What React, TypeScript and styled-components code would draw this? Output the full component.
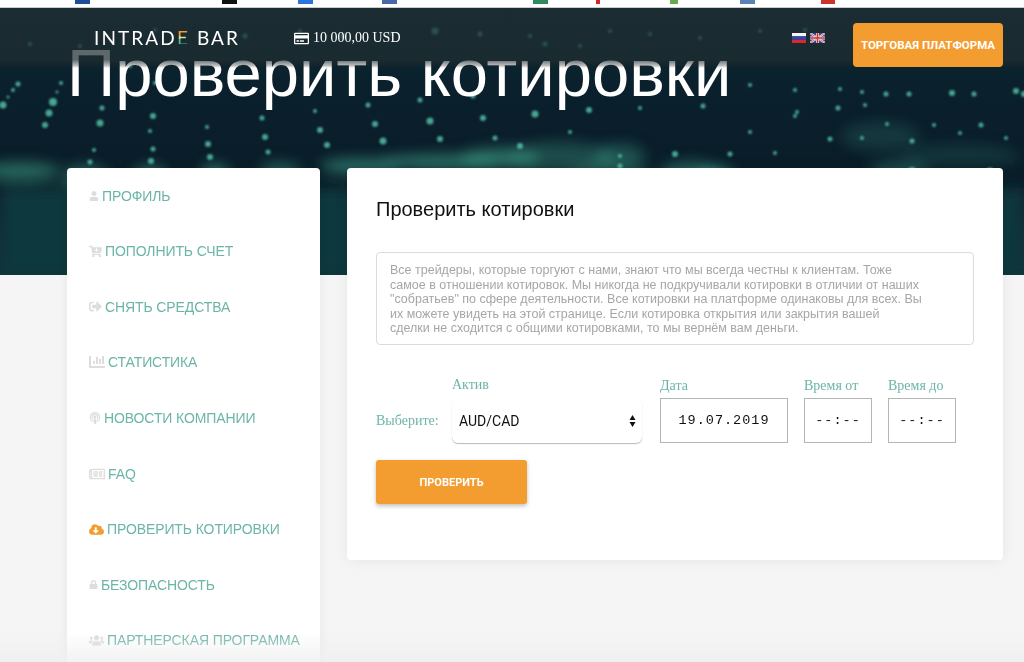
import React from "react";
import styled, { createGlobalStyle } from "styled-components";
import {
  FaUser, FaCartPlus, FaSignOutAlt, FaChartBar, FaPodcast, FaRegNewspaper,
  FaCloudDownloadAlt, FaLock, FaUsers, FaRegCreditCard,
} from "react-icons/fa";

const Global = createGlobalStyle`
  html, body { margin: 0; padding: 0; background: #f5f5f5; overflow: hidden; }
  * { box-sizing: border-box; }
`;

const Page = styled.div`
  width: 1024px;
  height: 662px;
  overflow: hidden;
  position: relative;
  background: #f5f5f5;
  font-family: "Liberation Sans", Arial, sans-serif;
`;

const BrowserStrip = styled.div`
  height: 8px;
  background: #fff;
  border-bottom: 1px solid #c9cbcc;
  overflow: hidden;
  svg { display: block; }
`;

const Hero = styled.section`
  position: relative;
  height: 267px;
  background: #0a1c28;
  overflow: hidden;
`;

const HeroArt = styled.svg`
  position: absolute;
  left: 0;
  top: 0;
`;

const HeroTitle = styled.h1`
  position: relative;
  margin: 0;
  padding: 26px 0 0 67px;
  font-size: 67px;
  line-height: 77px;
  font-weight: 400;
  color: #fff;
  white-space: nowrap;
`;

const HeaderBar = styled.header`
  position: absolute;
  left: 0;
  top: 0;
  width: 100%;
  height: 60px;
  display: flex;
  align-items: center;
  padding: 0 21px 0 94px;
  background: linear-gradient(to bottom, rgba(32,46,50,.72) 0, rgba(32,46,50,.72) 86%, rgba(40,40,42,.3) 96%, rgba(40,40,42,0) 100%);
`;

const Logo = styled.div`
  font-family: Lato, "Liberation Sans", sans-serif;
  font-weight: 400;
  font-size: 19px;
  line-height: 20px;
  letter-spacing: 2.1px;
  color: #fff;
  white-space: pre;
  width: 200px;
`;

const LogoE = styled.span`
  background: linear-gradient(to bottom, transparent 0 22%, #f39c2f 22% 42%, #d8e08a 42% 58%, #4fb7a0 58% 80%, transparent 80%);
  -webkit-background-clip: text;
  background-clip: text;
  color: transparent;
`;

const Balance = styled.div`
  display: flex;
  align-items: center;
  gap: 4px;
  font-family: "Liberation Serif", serif;
  font-size: 14px;
  color: #fff;
  svg { width: 15px; height: 15px; }
`;

const HeaderRight = styled.div`
  margin-left: auto;
  display: flex;
  align-items: center;
  gap: 28px;
`;

const Flags = styled.div`
  display: flex;
  gap: 4px;
  svg { display: block; }
`;

const PlatformButton = styled.a`
  width: 150px;
  height: 44px;
  margin-top: 22px;
  margin-bottom: 8px;
  display: flex;
  align-items: center;
  justify-content: center;
  background: #f39c2f;
  border-radius: 4px;
  color: #fff;
  font-family: Roboto, sans-serif;
  font-weight: 700;
  font-size: 11.5px;
  white-space: nowrap;
`;

const Content = styled.div`
  position: relative;
  margin-top: -107px;
  padding: 0 21px 0 67px;
  display: flex;
  gap: 27px;
  align-items: flex-start;
`;

const Sidebar = styled.nav`
  width: 253px;
  flex: none;
  height: 520px;
  background: #fff;
  border-radius: 4px 4px 0 0;
  box-shadow: 0 0 12px rgba(0,0,0,.06);
`;

const NavItem = styled.a`
  height: 55.55px;
  padding-left: 22px;
  display: flex;
  align-items: center;
  gap: 3px;
  font-size: 14px;
  letter-spacing: -0.1px;
  color: #6cb5a8;
  white-space: nowrap;
`;

const NavIcon = styled.span<{ $w: number; $active?: boolean }>`
  width: ${(p) => p.$w}px;
  flex: none;
  display: flex;
  color: ${(p) => (p.$active ? "#f39c2f" : "#dddddd")};
  svg { width: 100%; height: auto; display: block; }
`;

const Card = styled.main`
  width: 656px;
  height: 392px;
  flex: none;
  background: #fff;
  border-radius: 4px;
  box-shadow: 0 0 14px rgba(0,0,0,.07);
  padding: 29px 29px 0;
`;

const CardTitle = styled.h2`
  margin: 0;
  font-size: 20px;
  line-height: 24px;
  font-weight: 400;
  color: #111;
`;

const Notice = styled.p`
  margin: 31px 0 0;
  height: 93px;
  border: 1px solid #dcdcdc;
  border-radius: 4px;
  padding: 10px 13px;
  font-size: 12.5px;
  line-height: 14.5px;
  color: #a6a6a6;
  white-space: nowrap;
`;

const FormRow = styled.div`
  margin-top: 32px;
  display: flex;
  align-items: flex-end;
`;

const Label = styled.label`
  display: block;
  font-family: "Liberation Serif", serif;
  font-size: 14px;
  line-height: 16px;
  color: #6cb5a8;
  white-space: nowrap;
`;

const ChooseLabel = styled(Label)`
  width: 76px;
  margin-bottom: 14px;
`;

const Field = styled.div<{ $w: number; $gap: number }>`
  width: ${(p) => p.$w}px;
  margin-right: ${(p) => p.$gap}px;
  flex: none;
  display: flex;
  flex-direction: column;
  gap: 4px;
`;

const SelectBox = styled.div`
  height: 44px;
  margin-top: 2px;
  padding: 0 6px 0 7px;
  display: flex;
  align-items: center;
  justify-content: space-between;
  border-radius: 6px;
  box-shadow: 0 1px 1px rgba(0,0,0,.28);
  font-family: Roboto, sans-serif;
  font-size: 14px;
  color: #111;
  svg { display: block; }
`;

const InputBox = styled.div`
  height: 45px;
  border: 1px solid #b5b5b5;
  display: flex;
  align-items: center;
  justify-content: center;
  font-family: "Liberation Mono", monospace;
  font-size: 13.5px;
  letter-spacing: 1px;
  color: #111;
  overflow: hidden;
  white-space: nowrap;
`;

const CheckButton = styled.button`
  display: block;
  margin-top: 17px;
  width: 151px;
  height: 44px;
  border: 0;
  border-radius: 3px;
  background: #f39c2f;
  box-shadow: 0 2px 4px rgba(0,0,0,.25);
  color: #fff;
  font-family: Roboto, sans-serif;
  font-weight: 700;
  font-size: 11px;
`;

const BottomFade = styled.div`
  position: absolute;
  left: 0;
  bottom: 0;
  width: 100%;
  height: 30px;
  background: linear-gradient(to bottom, rgba(245,245,245,0), rgba(238,238,238,.75));
`;

const dots: [number, number, number][] = [
  [18,68,2.5],[13,74,2],[8,81,1.5],[53,86,4],[3,89,3.5],[49,97,3.5],[45,109,3],[100,107,3.5],[102,92,2.5],[153,100,3],[150,115,2],[153,133,2.5],[151,145,3],[90,146,2.5],[94,134,2],[208,128,3],[210,141,3],[265,121,3],[268,136,2.5],[320,114,3],[327,129,3],[383,125,3.5],[375,108,3],[430,105,3.5],[440,123,3],[495,122,2.5],[483,102,3],[473,80,2.5],[420,84,2.5],[368,89,2.5],[315,95,2],[262,102,2.5],[207,111,2],[155,67,2],[61,67,2],[57,76,1.5],
  [535,98,3.5],[589,94,3],[640,92,2],[703,90,2.5],[750,116,2],[520,130,3],[570,116,2],[620,140,2],[675,138,3],[730,138,2.5],[775,137,2],[830,123,2.5],[862,122,2],[912,125,2.5],[960,117,2],[1006,122,2],[912,155,4],[990,155,3.5],[1050,155,3.5],[1090,155,3],[750,158,3.5],[670,160,3],[620,150,2.5],
  [750,69,2],[795,74,2],[840,73,2],[886,78,2.5],[909,78,2.5],[952,77,3],[974,78,2.5],[1016,75,3],[1024,78,3],[865,89,2],[862,76,2],[838,92,2.5],[795,100,2],[797,96,2],[887,108,2],[934,109,2],[981,109,2.5],
  [155,14,2],[200,20,2],[245,20,2.5],[300,15,2],[343,20,3.5],[390,18,2.5],[435,15,3.5],[480,18,2.5],[30,28,2],[80,30,2],[130,50,2],[530,20,2],[545,28,2.5],[580,30,2],[610,15,2],[650,18,2],[700,22,2],[760,15,2],[805,14,2],[870,25,2]
];

const glows: [number, number, number, number, number][] = [
  [20,155,40,8,.55],[85,160,22,10,.5],[150,162,16,12,.55],[215,160,14,12,.55],[280,155,20,8,.45],[360,150,40,7,.6],[440,146,60,7,.6],[500,142,40,10,.5],
  [560,142,55,16,.3],[620,140,25,12,.35],[690,158,30,12,.45],[715,160,18,8,.7],[610,155,40,8,.3],[880,120,40,14,.18],[960,140,60,12,.15],[900,155,30,10,.3],
];

const bits: [number, number, string][] = [
  [75,15,"#1f4e96"],[222,15,"#111"],[298,15,"#2e73e0"],[382,15,"#4a67a8"],[533,15,"#2f8a5c"],[596,4,"#d8252a"],[670,8,"#6aa84f"],[740,15,"#5a83b5"],[821,14,"#c9352b"],
];

const items: { label: string; Icon: React.ComponentType; w: number; active?: boolean }[] = [
  { label: "ПРОФИЛЬ", Icon: FaUser, w: 10 },
  { label: "ПОПОЛНИТЬ СЧЕТ", Icon: FaCartPlus, w: 13 },
  { label: "СНЯТЬ СРЕДСТВА", Icon: FaSignOutAlt, w: 13 },
  { label: "СТАТИСТИКА", Icon: FaChartBar, w: 16 },
  { label: "НОВОСТИ КОМПАНИИ", Icon: FaPodcast, w: 12 },
  { label: "FAQ", Icon: FaRegNewspaper, w: 16 },
  { label: "ПРОВЕРИТЬ КОТИРОВКИ", Icon: FaCloudDownloadAlt, w: 15, active: true },
  { label: "БЕЗОПАСНОСТЬ", Icon: FaLock, w: 9 },
  { label: "ПАРТНЕРСКАЯ ПРОГРАММА", Icon: FaUsers, w: 15 },
];

export default function App() {
  return (
    <Page>
      <Global />
      <BrowserStrip>
        <svg width="1024" height="7">
          {bits.map(([x, w, c]) => (
            <rect key={x} x={x} y={0} width={w} height={4} fill={c} />
          ))}
        </svg>
      </BrowserStrip>
      <Hero>
        <HeroArt width="1024" height="267" viewBox="0 -8 1024 267">
          <defs>
            <filter id="b8" x="-50%" y="-50%" width="200%" height="200%"><feGaussianBlur stdDeviation="7" /></filter>
            <filter id="b1" x="-100%" y="-100%" width="300%" height="300%"><feGaussianBlur stdDeviation="0.9" /></filter>
            <linearGradient id="sky" x1="0" y1="0" x2="0" y2="1">
              <stop offset="0" stopColor="#0b2a30" />
              <stop offset=".35" stopColor="#0a1f2c" />
              <stop offset=".7" stopColor="#0a1c28" />
              <stop offset="1" stopColor="#0f3338" />
            </linearGradient>
          </defs>
          <rect x="0" y="-8" width="1024" height="267" fill="url(#sky)" />
          <g filter="url(#b8)">
            {glows.map(([x, y, rx, ry, o], i) => (
              <ellipse key={i} cx={x} cy={y} rx={rx} ry={ry} fill="#46b394" opacity={o} />
            ))}
            <rect x="0" y="172" width="1024" height="90" fill="#10393c" />
          </g>
          <g filter="url(#b1)">
            {dots.map(([x, y, r], i) => (
              <circle key={i} cx={x} cy={y} r={r} fill="#5fd3b4" opacity={0.75} />
            ))}
          </g>
        </HeroArt>
        <HeroTitle>Проверить котировки</HeroTitle>
        <HeaderBar>
          <Logo>INTRAD<LogoE>E</LogoE> BAR</Logo>
          <Balance><FaRegCreditCard />10 000,00 USD</Balance>
          <HeaderRight>
            <Flags>
              <svg width="14" height="10" viewBox="0 0 14 10">
                <rect width="14" height="3.4" fill="#f4f4f4" />
                <rect y="3.3" width="14" height="3.4" fill="#2d46b0" />
                <rect y="6.7" width="14" height="3.3" fill="#d8282f" />
              </svg>
              <svg width="15" height="10" viewBox="0 0 15 10">
                <rect width="15" height="10" fill="#36408f" />
                <path d="M0 0L15 10M15 0L0 10" stroke="#e9e9e9" strokeWidth="2" />
                <path d="M0 0L15 10M15 0L0 10" stroke="#c8343c" strokeWidth=".7" />
                <path d="M7.5 0V10M0 5H15" stroke="#e9e9e9" strokeWidth="3" />
                <path d="M7.5 0V10M0 5H15" stroke="#c8343c" strokeWidth="1.6" />
              </svg>
            </Flags>
            <PlatformButton>ТОРГОВАЯ ПЛАТФОРМА</PlatformButton>
          </HeaderRight>
        </HeaderBar>
      </Hero>
      <Content>
        <Sidebar>
          {items.map(({ label, Icon, w, active }) => (
            <NavItem key={label}>
              <NavIcon $w={w} $active={active}><Icon /></NavIcon>
              {label}
            </NavItem>
          ))}
        </Sidebar>
        <Card>
          <CardTitle>Проверить котировки</CardTitle>
          <Notice>
            Все трейдеры, которые торгуют с нами, знают что мы всегда честны к клиентам. Тоже<br />
            самое в отношении котировок. Мы никогда не подкручивали котировки в отличии от наших<br />
            "собратьев" по сфере деятельности. Все котировки на платформе одинаковы для всех. Вы<br />
            их можете увидеть на этой странице. Если котировка открытия или закрытия вашей<br />
            сделки не сходится с общими котировками, то мы вернём вам деньги.
          </Notice>
          <FormRow>
            <ChooseLabel>Выберите:</ChooseLabel>
            <Field $w={190} $gap={18}>
              <Label>Актив</Label>
              <SelectBox>
                AUD/CAD
                <svg width="7" height="14" viewBox="0 0 7 14">
                  <path d="M3.5 1L6.5 6H.5zM3.5 13L.5 8h6z" fill="#111" />
                </svg>
              </SelectBox>
            </Field>
            <Field $w={128} $gap={16}>
              <Label>Дата</Label>
              <InputBox>19.07.2019</InputBox>
            </Field>
            <Field $w={68} $gap={16}>
              <Label>Время от</Label>
              <InputBox>--:--</InputBox>
            </Field>
            <Field $w={68} $gap={0}>
              <Label>Время до</Label>
              <InputBox>--:--</InputBox>
            </Field>
          </FormRow>
          <CheckButton>ПРОВЕРИТЬ</CheckButton>
        </Card>
      </Content>
      <BottomFade />
    </Page>
  );
}
